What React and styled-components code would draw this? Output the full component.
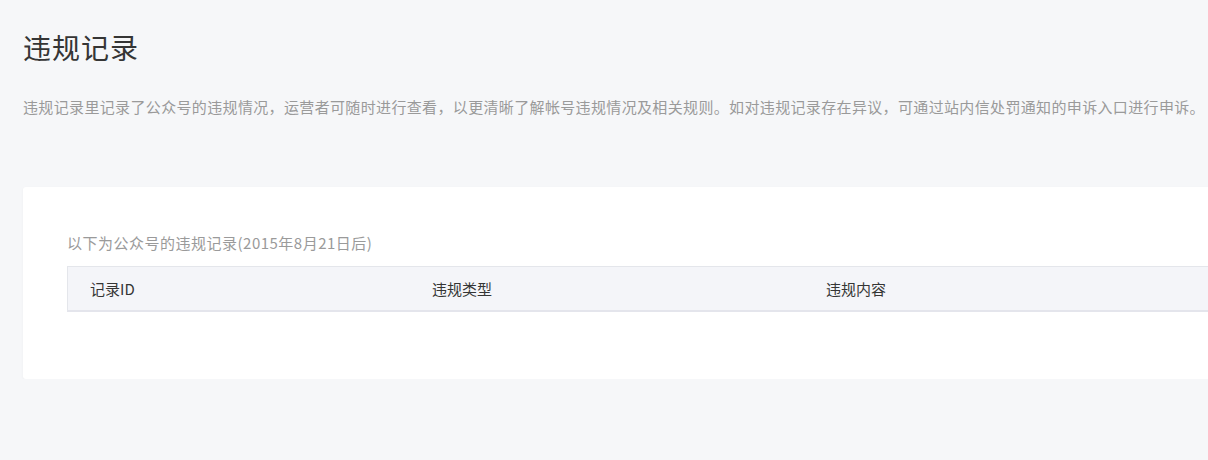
import React from 'react';
import styled, {createGlobalStyle} from 'styled-components';

const GlobalStyle = createGlobalStyle`
    html, body {
        margin: 0;
        padding: 0;
        background-color: #f6f7f9;
        overflow: hidden;
    }
    body {
        font-family: "Noto Sans CJK SC", "Noto Sans", sans-serif;
    }
`;

const Page = styled.div`
    width: 1240px;
    padding: 27px 0 0 23px;
`;

const Title = styled.h2`
    margin: 0 0 29px;
    font-size: 28px;
    line-height: 40px;
    letter-spacing: 1px;
    font-weight: 400;
    color: #353535;
`;

const Desc = styled.p`
    margin: 0 0 69px;
    font-size: 15px;
    line-height: 22px;
    letter-spacing: 0.35px;
    color: #9a9a9a;
    white-space: nowrap;
`;

const Card = styled.div`
    background-color: #fff;
    border-radius: 3px;
    box-shadow: 0 1px 3px rgba(0, 0, 0, 0.04);
    padding: 45px 44px 67px;
`;

const Caption = styled.div`
    font-size: 15px;
    line-height: 22px;
    letter-spacing: 0.5px;
    color: #9a9a9a;
    margin-bottom: 12px;
`;

const TableHead = styled.div`
    display: grid;
    grid-template-columns: 342px 394px 1fr;
    height: 43px;
    align-items: center;
    background-color: #f4f5f9;
    border-top: 1px solid #e4e6eb;
    border-left: 1px solid #e4e6eb;
    border-bottom: 2px solid #e4e5ec;
`;

const HeadCell = styled.div`
    padding-left: 22px;
    font-size: 15px;
    color: #353535;
`;

const columns = ['记录ID', '违规类型', '违规内容'];

export default function App() {
    return (
        <Page>
            <GlobalStyle/>
            <Title>违规记录</Title>
            <Desc>
                违规记录里记录了公众号的违规情况，运营者可随时进行查看，以更清晰了解帐号违规情况及相关规则。如对违规记录存在异议，可通过站内信处罚通知的申诉入口进行申诉。
            </Desc>
            <Card>
                <Caption>以下为公众号的违规记录(2015年8月21日后)</Caption>
                <TableHead>
                    {columns.map(col => (
                        <HeadCell key={col}>{col}</HeadCell>
                    ))}
                </TableHead>
            </Card>
        </Page>
    );
}
